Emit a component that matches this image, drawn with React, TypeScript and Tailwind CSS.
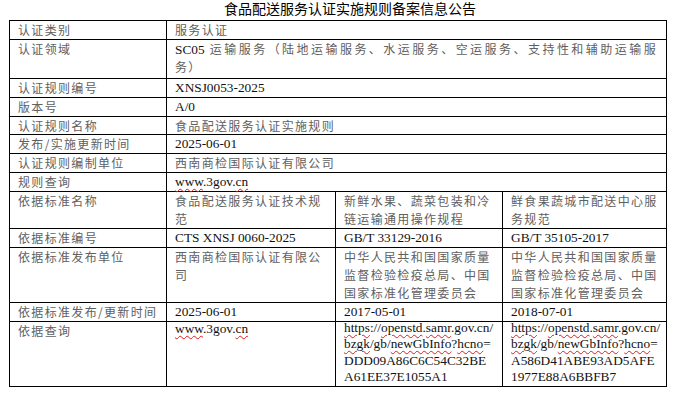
import React from 'react'

const zh =
  "font-[family-name:'Noto_Sans_CJK_SC',sans-serif] text-[12px] tracking-[1.33px] text-[#606060]"
const en =
  "font-[family-name:'Liberation_Serif',serif] text-[13.33px] tracking-normal text-[#111]"
const wavy =
  'underline decoration-wavy decoration-[#e01b1b] decoration-1 underline-offset-[2px]'

function Row({ h, wide, children }: { h: string; wide?: boolean; children: React.ReactNode }) {
  return (
    <div
      className={`grid border-b border-black ${h} ${
        wide ? 'grid-cols-[157px_500px]' : 'grid-cols-[157px_169px_167px_164px]'
      }`}
    >
      {children}
    </div>
  )
}

function Cell({ children, lang = 'zh' }: { children: React.ReactNode; lang?: 'zh' | 'en' }) {
  return (
    <div className={`border-r border-black px-[8px] ${lang === 'zh' ? zh : en}`}>
      {children}
    </div>
  )
}

// one visual line of text
function L({ children, h = 'h-[18px] leading-[18px]' }: { children: React.ReactNode; h?: string }) {
  return <div className={`whitespace-nowrap ${h}`}>{children}</div>
}

function Site() {
  return (
    <L>
      <span className={wavy}>www</span>.3gov.<span className={wavy}>cn</span>
    </L>
  )
}

function Link({ id1, id2 }: { id1: string; id2: string }) {
  const lh = 'h-[16.3px] leading-[16.3px]'
  return (
    <div className="-mt-[2px]">
      <L h={lh}>
        <span className={wavy}>https</span>://<span className={wavy}>openstd</span>.
        <span className={wavy}>samr</span>.gov.cn/
      </L>
      <L h={lh}>
        <span className={wavy}>bzgk</span>/gb/<span className={wavy}>newGbInfo</span>?
        <span className={wavy}>hcno</span>=
      </L>
      <L h={lh}>{id1}</L>
      <L h={lh}>{id2}</L>
    </div>
  )
}

export default function App() {
  return (
    <div className="h-[393px] w-[674px] overflow-hidden bg-white">
      {/* Title */}
      <div className="h-[20px] pl-[26px] text-center font-[family-name:'Noto_Sans_CJK_SC',sans-serif] text-[14px] leading-[16px] text-black">
        食品配送服务认证实施规则备案信息公告
      </div>

      <div className="ml-[9px] w-[658px] border-l border-t border-black">
        <Row h="h-[19px]" wide>
          <Cell><L>认证类别</L></Cell>
          <Cell><L>服务认证</L></Cell>
        </Row>
        <Row h="h-[39px]" wide>
          <Cell><L>认证领域</L></Cell>
          <Cell>
            <div className="h-[18px] pr-[1px] text-justify leading-[18px] [text-align-last:justify]">
              <span className={en}>SC05</span> 运输服务（陆地运输服务、水运服务、空运服务、支持性和辅助运输服
            </div>
            <L>务）</L>
          </Cell>
        </Row>
        <Row h="h-[19px]" wide>
          <Cell><L>认证规则编号</L></Cell>
          <Cell lang="en"><L>XNSJ0053-2025</L></Cell>
        </Row>
        <Row h="h-[19px]" wide>
          <Cell><L>版本号</L></Cell>
          <Cell lang="en"><L>A/0</L></Cell>
        </Row>
        <Row h="h-[18px]" wide>
          <Cell><L>认证规则名称</L></Cell>
          <Cell><L>食品配送服务认证实施规则</L></Cell>
        </Row>
        <Row h="h-[19px]" wide>
          <Cell><L>发布/实施更新时间</L></Cell>
          <Cell lang="en"><L>2025-06-01</L></Cell>
        </Row>
        <Row h="h-[19px]" wide>
          <Cell><L>认证规则编制单位</L></Cell>
          <Cell><L>西南商检国际认证有限公司</L></Cell>
        </Row>
        <Row h="h-[19px]" wide>
          <Cell><L>规则查询</L></Cell>
          <Cell lang="en"><Site /></Cell>
        </Row>

        <Row h="h-[37px]">
          <Cell><L>依据标准名称</L></Cell>
          <Cell><L>食品配送服务认证技术规</L><L>范</L></Cell>
          <Cell><L>新鲜水果、蔬菜包装和冷</L><L>链运输通用操作规程</L></Cell>
          <Cell><L>鲜食果蔬城市配送中心服</L><L>务规范</L></Cell>
        </Row>
        <Row h="h-[19px]">
          <Cell><L>依据标准编号</L></Cell>
          <Cell lang="en"><L>CTS XNSJ 0060-2025</L></Cell>
          <Cell lang="en"><L>GB/T 33129-2016</L></Cell>
          <Cell lang="en"><L>GB/T 35105-2017</L></Cell>
        </Row>
        <Row h="h-[55px]">
          <Cell><L>依据标准发布单位</L></Cell>
          <Cell><L>西南商检国际认证有限公</L><L>司</L></Cell>
          <Cell>
            <L>中华人民共和国国家质量</L>
            <L>监督检验检疫总局、中国</L>
            <L>国家标准化管理委员会</L>
          </Cell>
          <Cell>
            <L>中华人民共和国国家质量</L>
            <L>监督检验检疫总局、中国</L>
            <L>国家标准化管理委员会</L>
          </Cell>
        </Row>
        <Row h="h-[19px]">
          <Cell><L>依据标准发布/更新时间</L></Cell>
          <Cell lang="en"><L>2025-06-01</L></Cell>
          <Cell lang="en"><L>2017-05-01</L></Cell>
          <Cell lang="en"><L>2018-07-01</L></Cell>
        </Row>
        <Row h="h-[65px]">
          <Cell><L>依据查询</L></Cell>
          <Cell lang="en"><div className="-mt-[2px]"><Site /></div></Cell>
          <Cell lang="en"><Link id1="DDD09A86C6C54C32BE" id2="A61EE37E1055A1" /></Cell>
          <Cell lang="en"><Link id1="A586D41ABE93AD5AFE" id2="1977E88A6BBFB7" /></Cell>
        </Row>
      </div>
    </div>
  )
}
